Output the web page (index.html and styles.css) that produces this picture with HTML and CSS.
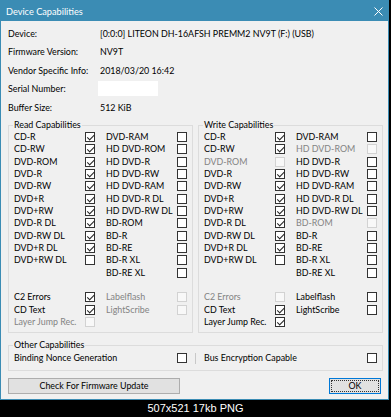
FILE: index.html
```html
<!DOCTYPE html>
<html lang="en">
<head>
    <meta charset="UTF-8">
    <meta name="viewport" content="width=device-width, initial-scale=1.0">
    <title>Device Capabilities</title>
    <link rel="stylesheet" href="styles.css">
</head>
<body>
    <div class="window">
        <div class="titlebar">
            <span class="title">Device Capabilities</span>
            <svg class="close" viewBox="0 0 9 9"><path d="M0.5 0.5 L8.5 8.5 M8.5 0.5 L0.5 8.5" stroke="#fff" stroke-width="1" fill="none"/></svg>
        </div>

        <div class="content">
            <div class="info">
                <span>Device:</span><span>[0:0:0] LITEON DH-16AFSH PREMM2 NV9T (F:) (USB)</span>
                <span>Firmware Version:</span><span>NV9T</span>
                <span>Vendor Specific Info:</span><span>2018/03/20 16:42</span>
                <span>Serial Number:</span><span class="serial"></span>
                <span>Buffer Size:</span><span>512 KiB</span>
            </div>

            <div class="groups">
                <fieldset class="group">
                    <legend>Read Capabilities</legend>
                    <div class="caps">
                        <!-- first column -->
                        <div class="cap"><span>CD-R</span><span class="cb on"></span></div>
                        <div class="cap"><span>CD-RW</span><span class="cb on"></span></div>
                        <div class="cap"><span>DVD-ROM</span><span class="cb on"></span></div>
                        <div class="cap"><span>DVD-R</span><span class="cb on"></span></div>
                        <div class="cap"><span>DVD-RW</span><span class="cb on"></span></div>
                        <div class="cap"><span>DVD+R</span><span class="cb on"></span></div>
                        <div class="cap"><span>DVD+RW</span><span class="cb on"></span></div>
                        <div class="cap"><span>DVD-R DL</span><span class="cb on"></span></div>
                        <div class="cap"><span>DVD-RW DL</span><span class="cb on"></span></div>
                        <div class="cap"><span>DVD+R DL</span><span class="cb on"></span></div>
                        <div class="cap"><span>DVD+RW DL</span><span class="cb"></span></div>
                        <div></div>
                        <div></div>
                        <div class="cap"><span>C2 Errors</span><span class="cb on"></span></div>
                        <div class="cap"><span>CD Text</span><span class="cb on"></span></div>
                        <div class="cap off"><span>Layer Jump Rec.</span><span class="cb"></span></div>
                        <!-- second column -->
                        <div class="cap"><span>DVD-RAM</span><span class="cb"></span></div>
                        <div class="cap"><span>HD DVD-ROM</span><span class="cb"></span></div>
                        <div class="cap"><span>HD DVD-R</span><span class="cb"></span></div>
                        <div class="cap"><span>HD DVD-RW</span><span class="cb"></span></div>
                        <div class="cap"><span>HD DVD-RAM</span><span class="cb"></span></div>
                        <div class="cap"><span>HD DVD-R DL</span><span class="cb"></span></div>
                        <div class="cap"><span>HD DVD-RW DL</span><span class="cb"></span></div>
                        <div class="cap"><span>BD-ROM</span><span class="cb"></span></div>
                        <div class="cap"><span>BD-R</span><span class="cb"></span></div>
                        <div class="cap"><span>BD-RE</span><span class="cb"></span></div>
                        <div class="cap"><span>BD-R XL</span><span class="cb"></span></div>
                        <div class="cap"><span>BD-RE XL</span><span class="cb"></span></div>
                        <div></div>
                        <div class="cap off"><span>Labelflash</span><span class="cb"></span></div>
                        <div class="cap off"><span>LightScribe</span><span class="cb"></span></div>
                        <div></div>
                    </div>
                </fieldset>

                <fieldset class="group">
                    <legend>Write Capabilities</legend>
                    <div class="caps">
                        <!-- first column -->
                        <div class="cap"><span>CD-R</span><span class="cb on"></span></div>
                        <div class="cap"><span>CD-RW</span><span class="cb on"></span></div>
                        <div class="cap off"><span>DVD-ROM</span><span class="cb"></span></div>
                        <div class="cap"><span>DVD-R</span><span class="cb on"></span></div>
                        <div class="cap"><span>DVD-RW</span><span class="cb on"></span></div>
                        <div class="cap"><span>DVD+R</span><span class="cb on"></span></div>
                        <div class="cap"><span>DVD+RW</span><span class="cb on"></span></div>
                        <div class="cap"><span>DVD-R DL</span><span class="cb on"></span></div>
                        <div class="cap"><span>DVD-RW DL</span><span class="cb on"></span></div>
                        <div class="cap"><span>DVD+R DL</span><span class="cb on"></span></div>
                        <div class="cap"><span>DVD+RW DL</span><span class="cb"></span></div>
                        <div></div>
                        <div></div>
                        <div class="cap off"><span>C2 Errors</span><span class="cb"></span></div>
                        <div class="cap"><span>CD Text</span><span class="cb on"></span></div>
                        <div class="cap"><span>Layer Jump Rec.</span><span class="cb on"></span></div>
                        <!-- second column -->
                        <div class="cap"><span>DVD-RAM</span><span class="cb"></span></div>
                        <div class="cap off"><span>HD DVD-ROM</span><span class="cb"></span></div>
                        <div class="cap"><span>HD DVD-R</span><span class="cb"></span></div>
                        <div class="cap"><span>HD DVD-RW</span><span class="cb"></span></div>
                        <div class="cap"><span>HD DVD-RAM</span><span class="cb"></span></div>
                        <div class="cap"><span>HD DVD-R DL</span><span class="cb"></span></div>
                        <div class="cap"><span>HD DVD-RW DL</span><span class="cb"></span></div>
                        <div class="cap off"><span>BD-ROM</span><span class="cb"></span></div>
                        <div class="cap"><span>BD-R</span><span class="cb"></span></div>
                        <div class="cap"><span>BD-RE</span><span class="cb"></span></div>
                        <div class="cap"><span>BD-R XL</span><span class="cb"></span></div>
                        <div class="cap"><span>BD-RE XL</span><span class="cb"></span></div>
                        <div></div>
                        <div class="cap"><span>Labelflash</span><span class="cb"></span></div>
                        <div class="cap"><span>LightScribe</span><span class="cb"></span></div>
                        <div></div>
                    </div>
                </fieldset>
            </div>

            <fieldset class="group other">
                <legend>Other Capabilities</legend>
                <div class="other-row">
                    <div class="cap"><span>Binding Nonce Generation</span><span class="cb"></span></div>
                    <span class="sep"></span>
                    <div class="cap"><span>Bus Encryption Capable</span><span class="cb"></span></div>
                </div>
            </fieldset>

            <div class="buttons">
                <button class="btn firmware">Check For Firmware Update</button>
                <button class="btn ok">OK</button>
            </div>
        </div>
    </div>

    <div class="caption">507x521 17kb PNG</div>
</body>
</html>
```

FILE: styles.css
```css
body {
    margin: 0;
    padding: 0;
    background-color: #000;
    font-family: Lato, "Noto Sans", sans-serif;
    font-size: 8.9px;
    color: #000;
}

.window {
    width: 389px;
    box-sizing: border-box;
    border: 1px solid #3b8cb4;
    background-color: #f0f0f0;
}

.titlebar {
    display: flex;
    justify-content: space-between;
    align-items: center;
    height: 20px;
    padding: 0 5px 0 5px;
    background-color: #3b8cb4;
    color: #fff;
    font-size: 9.2px;
}

.titlebar .close {
    width: 9px;
    height: 9px;
}

.content {
    padding: 3px 4px 5px 7px;
}

.info {
    display: grid;
    grid-template-columns: 92px 1fr;
    grid-auto-rows: 18.5px;
    align-items: center;
    white-space: nowrap;
}

.info .serial {
    width: 60px;
    height: 15px;
    margin-left: -2px;
    background-color: #fff;
}

.groups {
    display: flex;
    gap: 5px;
    margin-top: 2.5px;
}

.group {
    margin: 0;
    padding: 0 5px 4px;
    border: 1px solid #dcdcdc;
    width: 185px;
    min-width: 0;
    box-sizing: border-box;
}

.group legend {
    padding: 0 1px;
    margin-left: -1px;
    line-height: 12px;
}

.caps {
    display: grid;
    grid-template-columns: 81px 81px;
    grid-template-rows: repeat(16, 12.33px);
    grid-auto-flow: column;
    column-gap: 11px;
}

.cap {
    display: flex;
    align-items: center;
    justify-content: space-between;
    line-height: 12px;
    white-space: nowrap;
}

.cb {
    position: relative;
    flex: none;
    width: 10px;
    height: 10px;
    box-sizing: border-box;
    border: 1px solid #333;
    background-color: #fff;
}

.cb.on::after {
    content: "";
    position: absolute;
    left: 2.5px;
    top: 0;
    width: 2.5px;
    height: 5.5px;
    border: solid #222;
    border-width: 0 1px 1px 0;
    transform: rotate(45deg);
}

.cap.off {
    color: #838383;
}

.cap.off .cb {
    border-color: #d2d2d2;
    background-color: #f8f8f8;
}

.other {
    width: 375px;
    margin-top: 6px;
    padding: 1px 5px 5px;
}

.other-row {
    display: grid;
    grid-template-columns: 173px 17px 173px;
    height: 12.33px;
    align-items: center;
}

.other-row .sep {
    justify-self: center;
    width: 1px;
    height: 11px;
    background-color: #c8c8c8;
}

.buttons {
    display: flex;
    justify-content: space-between;
    margin-top: 7px;
    padding-right: 3px;
}

.btn {
    height: 16px;
    box-sizing: border-box;
    padding: 0;
    border: 1px solid #adadad;
    background-color: #e1e1e1;
    font: inherit;
    line-height: 14px;
    color: #000;
}

.btn.firmware {
    width: 172px;
}

.btn.ok {
    width: 52px;
    border-color: #0078d7;
    outline: 1px dotted #333;
    outline-offset: -3px;
}

.caption {
    height: 17px;
    line-height: 17px;
    text-align: center;
    color: #fff;
    font-family: "Liberation Sans", Arial, sans-serif;
    font-size: 11px;
}
```
